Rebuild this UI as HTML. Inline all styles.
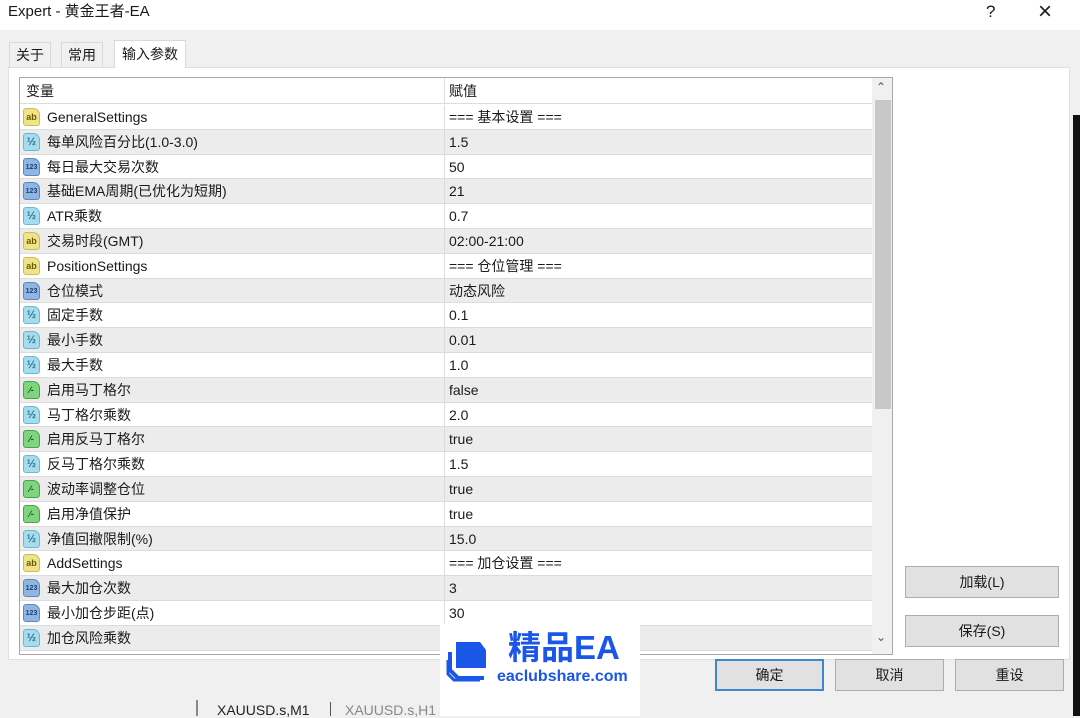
<!DOCTYPE html><html><head><meta charset="utf-8"><style>
*{margin:0;padding:0;box-sizing:border-box}
body{width:1080px;height:716px;overflow:hidden;background:#f0f0f0;font-family:"Liberation Sans","Noto Sans CJK SC",sans-serif;font-size:14px;color:#1a1a1a;position:relative}
.a{position:absolute}
.title{left:0;top:0;width:1080px;height:30px;background:#fff}
.tab{top:42px;height:26px;border:1px solid #d9d9d9;border-bottom:none;padding:0 6px;line-height:24px;font-size:14px;background:#f0f0f0}
.panel{left:8px;top:67px;width:1062px;height:593px;background:#fff;border:1px solid #e0e0e0}
.grid{left:19px;top:77px;width:874px;height:578px;border:1px solid #a8a8a8;background:#fff;overflow:hidden}
.row{position:absolute;left:0;width:852px;height:24.8px;border-bottom:1px solid #dcdcdc}
.row.g{background:#ececec}
.row span{position:absolute;top:0;line-height:24px;height:24px;white-space:nowrap}
.row .n{left:27px}.row .v{left:429px}
.row:before{content:"";position:absolute;left:424px;top:0;bottom:0;border-left:1px solid #dcdcdc}
.ic{position:absolute;left:3px;top:3px;width:17px;height:18px;border-radius:3px 7px 3px 3px;font-size:9px;font-style:normal;font-weight:bold;text-align:center;line-height:17px;font-family:"Liberation Sans",sans-serif}
.ab{background:#efe48a;border:1px solid #cbbd50;color:#6a5a00}
.n3{background:#8fb6e3;border:1px solid #5d87bf;color:#1d3f70;font-size:7px}
.hf{background:#a5dcee;border:1px solid #6bb7d1;color:#2a7090;font-size:11px}
.bl{background:#7fd47f;border:1px solid #4aa34a;color:#165016}
.btn{background:#e1e1e1;border:1px solid #adadad;text-align:center;line-height:30px;font-size:14px}
.hd{position:absolute;top:0;line-height:26px}
</style></head><body>
<div class="a title"></div>
<div class="a" style="left:8px;top:3px;font-size:15px;line-height:18px">Expert - 黄金王者-EA</div>
<div class="a" style="left:986px;top:2px;font-size:17px">?</div>
<div class="a" style="left:1038px;top:-2px;font-size:24px;font-weight:300">×</div>
<div class="a tab" style="left:9px">关于</div>
<div class="a tab" style="left:61px">常用</div>
<div class="a panel"></div>
<div class="a tab" style="left:114px;top:40px;height:28px;background:#fff;padding:0 7px;line-height:26px">输入参数</div>
<div class="a grid">
<div class="a" style="left:0;top:0;width:852px;height:26px;border-bottom:1px solid #dcdcdc"><span class="hd" style="left:6px">变量</span><span class="hd" style="left:429px">赋值</span><div class="a" style="left:424px;top:0;height:26px;border-left:1px solid #dcdcdc"></div></div>
<div class="row" style="top:27px"><i class="ic ab">ab</i><span class="n">GeneralSettings</span><span class="v">=== 基本设置 ===</span></div>
<div class="row g" style="top:51.8px"><i class="ic hf">½</i><span class="n">每单风险百分比(1.0-3.0)</span><span class="v">1.5</span></div>
<div class="row" style="top:76.6px"><i class="ic n3">123</i><span class="n">每日最大交易次数</span><span class="v">50</span></div>
<div class="row g" style="top:101.4px"><i class="ic n3">123</i><span class="n">基础EMA周期(已优化为短期)</span><span class="v">21</span></div>
<div class="row" style="top:126.2px"><i class="ic hf">½</i><span class="n">ATR乘数</span><span class="v">0.7</span></div>
<div class="row g" style="top:151px"><i class="ic ab">ab</i><span class="n">交易时段(GMT)</span><span class="v">02:00-21:00</span></div>
<div class="row" style="top:175.8px"><i class="ic ab">ab</i><span class="n">PositionSettings</span><span class="v">=== 仓位管理 ===</span></div>
<div class="row g" style="top:200.6px"><i class="ic n3">123</i><span class="n">仓位模式</span><span class="v">动态风险</span></div>
<div class="row" style="top:225.4px"><i class="ic hf">½</i><span class="n">固定手数</span><span class="v">0.1</span></div>
<div class="row g" style="top:250.2px"><i class="ic hf">½</i><span class="n">最小手数</span><span class="v">0.01</span></div>
<div class="row" style="top:275px"><i class="ic hf">½</i><span class="n">最大手数</span><span class="v">1.0</span></div>
<div class="row g" style="top:299.8px"><i class="ic bl">⁄-</i><span class="n">启用马丁格尔</span><span class="v">false</span></div>
<div class="row" style="top:324.6px"><i class="ic hf">½</i><span class="n">马丁格尔乘数</span><span class="v">2.0</span></div>
<div class="row g" style="top:349.4px"><i class="ic bl">⁄-</i><span class="n">启用反马丁格尔</span><span class="v">true</span></div>
<div class="row" style="top:374.2px"><i class="ic hf">½</i><span class="n">反马丁格尔乘数</span><span class="v">1.5</span></div>
<div class="row g" style="top:399px"><i class="ic bl">⁄-</i><span class="n">波动率调整仓位</span><span class="v">true</span></div>
<div class="row" style="top:423.8px"><i class="ic bl">⁄-</i><span class="n">启用净值保护</span><span class="v">true</span></div>
<div class="row g" style="top:448.6px"><i class="ic hf">½</i><span class="n">净值回撤限制(%)</span><span class="v">15.0</span></div>
<div class="row" style="top:473.4px"><i class="ic ab">ab</i><span class="n">AddSettings</span><span class="v">=== 加仓设置 ===</span></div>
<div class="row g" style="top:498.2px"><i class="ic n3">123</i><span class="n">最大加仓次数</span><span class="v">3</span></div>
<div class="row" style="top:523px"><i class="ic n3">123</i><span class="n">最小加仓步距(点)</span><span class="v">30</span></div>
<div class="row g" style="top:547.8px"><i class="ic hf">½</i><span class="n">加仓风险乘数</span><span class="v"></span></div>
<div class="a" style="left:852px;top:0;width:20px;height:578px;background:#f0f0f0"></div>
<div class="a" style="left:855px;top:22px;width:16px;height:309px;background:#c8c8c8"></div>
<div class="a" style="left:856px;top:2px;font-size:12px;color:#555">&#8963;</div>
<div class="a" style="left:856px;top:552px;font-size:12px;color:#555">&#8964;</div>
</div>
<div class="a btn" style="left:905px;top:566px;width:154px;height:32px">加载(L)</div>
<div class="a btn" style="left:905px;top:615px;width:154px;height:32px">保存(S)</div>
<div class="a btn" style="left:715px;top:659px;width:109px;height:32px;border:2px solid #3c88d0;line-height:28px">确定</div>
<div class="a btn" style="left:835px;top:659px;width:109px;height:32px">取消</div>
<div class="a btn" style="left:955px;top:659px;width:109px;height:32px">重设</div>
<div class="a" style="left:1073px;top:115px;width:7px;height:601px;background:#111"></div>
<div class="a" style="left:196px;top:700px;width:260px;height:16px;background:#f0f0f0;border-left:2px double #888"></div>
<div class="a" style="left:217px;top:702px;font-size:14px;color:#222">XAUUSD.s,M1</div>
<div class="a" style="left:330px;top:702px;height:14px;border-left:1px solid #555"></div>
<div class="a" style="left:345px;top:702px;font-size:14px;color:#888">XAUUSD.s,H1</div>
<div class="a" style="left:440px;top:624px;width:200px;height:92px;background:#fff"></div>
<svg class="a" style="left:444px;top:636px" width="48" height="48" viewBox="0 0 48 48"><path d="M12 6h24l6 8v18H12z" fill="#1a56e8"/><path d="M6 16v18l8 8h26" fill="none" stroke="#1a56e8" stroke-width="4"/><path d="M4 24v14l6 6h26" fill="none" stroke="#1a56e8" stroke-width="3"/></svg>
<div class="a" style="left:508px;top:628px;font-size:33px;line-height:40px;font-weight:bold;color:#1a56e8">精品EA</div>
<div class="a" style="left:497px;top:667px;font-size:16px;line-height:20px;font-weight:bold;color:#1a56e8">eaclubshare.com</div>
</body></html>
